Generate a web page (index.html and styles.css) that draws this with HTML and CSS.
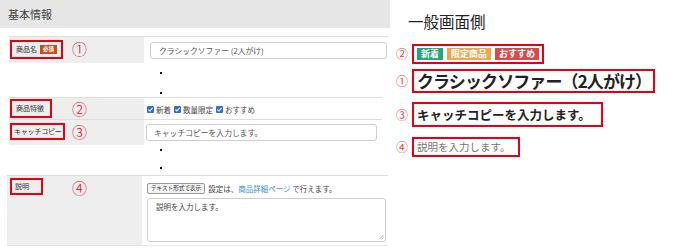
FILE: index.html
```html
<!DOCTYPE html>
<html lang="ja">
<head>
<meta charset="utf-8">
<link rel="stylesheet" href="styles.css">
</head>
<body>
<div class="page">
  <section class="admin">
    <div class="admin-head">基本情報</div>
    <div class="rows">
      <div class="row row-name">
        <div class="label-cell">
          <span class="mark mark-name">商品名<span class="req">必須</span></span>
          <span class="num">①</span>
        </div>
        <div class="value-cell">
          <div class="field field-name">クラシックソファー (2人がけ)</div>
        </div>
      </div>
      <div class="gap gap1"><span class="dot"></span><span class="dot"></span></div>
      <div class="row row-feat">
        <div class="label-cell">
          <span class="mark">商品特徴</span>
          <span class="num">②</span>
        </div>
        <div class="value-cell checks">
          <span class="cb"><svg viewBox="0 0 7 7" width="7" height="7"><rect width="7" height="7" rx="1" fill="#2f6fd6"/><path d="M1.4 3.6 L2.9 5 L5.6 1.9" fill="none" stroke="#fff" stroke-width="1.1"/></svg>新着</span>
          <span class="cb"><svg viewBox="0 0 7 7" width="7" height="7"><rect width="7" height="7" rx="1" fill="#2f6fd6"/><path d="M1.4 3.6 L2.9 5 L5.6 1.9" fill="none" stroke="#fff" stroke-width="1.1"/></svg>数量限定</span>
          <span class="cb"><svg viewBox="0 0 7 7" width="7" height="7"><rect width="7" height="7" rx="1" fill="#2f6fd6"/><path d="M1.4 3.6 L2.9 5 L5.6 1.9" fill="none" stroke="#fff" stroke-width="1.1"/></svg>おすすめ</span>
        </div>
      </div>
      <div class="row row-catch">
        <div class="label-cell">
          <span class="mark mark-catch">キャッチコピー</span>
          <span class="num">③</span>
        </div>
        <div class="value-cell">
          <div class="field field-catch">キャッチコピーを入力します。</div>
        </div>
      </div>
      <div class="gap gap2"><span class="dot"></span><span class="dot"></span></div>
      <div class="row row-desc">
        <div class="label-cell">
          <span class="mark mark-desc">説明</span>
          <span class="num">④</span>
        </div>
        <div class="value-cell desc">
          <div class="desc-line"><span class="btn">テキスト形式で表示</span><span>設定は、<span class="link">商品詳細ページ</span> で行えます。</span></div>
          <div class="area">説明を入力します。<svg class="grip" viewBox="0 0 6 6" width="6" height="6"><path d="M5.5 1 L1 5.5 M5.5 3.5 L3.5 5.5" stroke="#999" stroke-width="0.8"/></svg></div>
        </div>
      </div>
    </div>
  </section>
  <section class="front">
    <h2 class="front-title">一般画面側</h2>
    <div class="item item-badges">
      <span class="fnum">②</span>
      <div class="box badges">
        <span class="badge b-new">新着</span>
        <span class="badge b-lim">限定商品</span>
        <span class="badge b-rec">おすすめ</span>
      </div>
    </div>
    <div class="item item-title">
      <span class="fnum">①</span>
      <div class="box title">クラシックソファー（2人がけ）</div>
    </div>
    <div class="item item-catch">
      <span class="fnum">③</span>
      <div class="box catch">キャッチコピーを入力します。</div>
    </div>
    <div class="item item-desc">
      <span class="fnum">④</span>
      <div class="box descr">説明を入力します。</div>
    </div>
  </section>
</div>
</body>
</html>
```

FILE: styles.css
```css
* { box-sizing: border-box; }
html, body { margin: 0; padding: 0; background: #fff; }
body {
  font-family: "Noto Sans CJK JP", "Noto Sans", sans-serif;
  color: #333;
  width: 673px;
  height: 249px;
  overflow: hidden;
}
.page { display: flex; }

/* ---------- admin side ---------- */
.admin { width: 390px; flex: none; }
.admin-head {
  height: 28px;
  background: #e6e6e6;
  font-size: 11px;
  line-height: 28px;
  padding-left: 8px;
  color: #444;
}
.rows { margin: 8px 2px 0 9px; }
.row {
  display: grid;
  grid-template-columns: 135px 1fr;
  border-top: 1px solid #dedede;
}
.row-desc { border-bottom: 1px solid #e6e6e6; }
.label-cell {
  background: #eeeeee;
  display: grid;
  grid-template-columns: 62px auto;
  align-items: start;
  padding-left: 1px;
}
.mark {
  justify-self: start;
  border: 2px solid #e60012;
  font-size: 7px;
  line-height: 9px;
  padding: 2px 4px 2px 3px;
  color: #333;
  white-space: nowrap;
  display: inline-flex;
  align-items: center;
  gap: 3px;
}
.req {
  background: #c4511d;
  color: #fff;
  font-size: 5.5px;
  font-weight: bold;
  line-height: 9px;
  padding: 0 3px;
}
.num {
  color: #e60012;
  font-size: 15px;
  line-height: 15px;
  font-weight: 300;
}
.value-cell { background: #fff; font-size: 7.5px; color: #444; }

.row-name { height: 27px; }
.row-name .label-cell { padding-top: 3px; }
.row-name .mark { padding: 3px 4px 3px 4px; }
.row-name .num { margin-top: 1px; }
.row-name .value-cell { padding: 5px 1px 0 6px; }
.field {
  border: 1px solid #cfcfcf;
  border-radius: 3px;
  height: 17px;
  line-height: 15px;
  padding-left: 8px;
  color: #555;
  font-size: 7.8px;
}

.gap { position: relative; }
.gap1 { height: 34px; }
.gap2 { height: 30px; }
.dot {
  position: absolute;
  left: 151px;
  width: 2px;
  height: 2px;
  background: #111;
}
.gap1 .dot:first-child { top: 9px; }
.gap1 .dot:last-child { top: 29px; }
.gap2 .dot:first-child { top: 4px; }
.gap2 .dot:last-child { top: 22px; }

.row-feat { height: 22px; margin-right: 6px; }
.row-feat .label-cell { padding-top: 1px; }
.row-feat .mark { padding: 3px 6px 3px 4px; }
.row-feat .num { margin-top: 2px; }
.checks {
  display: flex;
  align-items: center;
  gap: 3px;
  padding-left: 3px;
  padding-top: 1px;
}
.cb { display: inline-flex; align-items: center; gap: 2px; color: #444; }
.cb svg { display: block; }

.row-catch { height: 26px; margin-right: 6px; }
.row-catch .label-cell { padding-top: 3px; }
.row-catch .mark-catch { padding: 2px 1px 2px 2px; letter-spacing: -0.2px; }
.row-catch .num { margin-top: 1px; }
.row-catch .value-cell { padding: 4px 5px 0 2px; }
.field-catch { padding-left: 7px; }

.row-desc { height: 71px; margin-left: -2px; }
.row-desc .label-cell { padding-top: 2px; padding-left: 3px; grid-template-columns: 62px auto; }
.mark-desc { padding: 2px 3px; min-width: 33px; }
.row-desc .num { margin-top: 2px; }
.desc { padding: 7px 2px 0 5px; }
.desc-line { display: flex; align-items: center; gap: 3px; height: 11px; }
.btn {
  border: 1px solid #999;
  border-radius: 2px;
  background: #f4f4f4;
  font-size: 5.6px;
  line-height: 9px;
  padding: 0 3px;
  color: #333;
  white-space: nowrap;
}
.link { color: #3a8fd4; }
.area {
  position: relative;
  margin-top: 4px;
  height: 44px;
  border: 1px solid #cfcfcf;
  border-radius: 3px;
  padding: 3px 8px;
  line-height: 10px;
  color: #444;
  font-size: 7.5px;
}
.grip { position: absolute; right: 1px; bottom: 1px; }

/* ---------- front side ---------- */
.front { flex: 1; padding-left: 6px; }
.front-title {
  margin: 12px 0 0 12px;
  font-size: 15.5px;
  line-height: 18px;
  font-weight: normal;
  color: #222;
}
.item { display: flex; align-items: center; }
.fnum {
  width: 16px;
  color: #e8474b;
  font-size: 12px;
  line-height: 12px;
}
.box { border: 2px solid #e60012; }
.item-badges { margin-top: 14px; }
.badges { display: flex; gap: 4px; padding: 3px 3px; height: 20px; align-items: center; }
.badge {
  color: #fff;
  font-weight: bold;
  font-size: 9px;
  line-height: 12px;
  padding: 0 4px;
  display: block;
}
.b-new { background: #26a674; }
.b-lim { background: #efa549; }
.b-rec { background: #d74b4b; }
.item-title { margin-top: 5px; }
.title {
  font-size: 17px;
  font-weight: bold;
  line-height: 20px;
  padding: 0 2px 0 3px;
  color: #222;
  letter-spacing: -0.9px;
  white-space: nowrap;
}
.item-catch { margin-top: 9px; }
.catch {
  font-size: 12.5px;
  font-weight: bold;
  line-height: 21px;
  padding: 0 10px 0 3px;
  color: #222;
}
.item-desc { margin-top: 10px; }
.descr {
  font-size: 10.5px;
  line-height: 16px;
  padding: 0 8px 0 3px;
  color: #777;
}
```
